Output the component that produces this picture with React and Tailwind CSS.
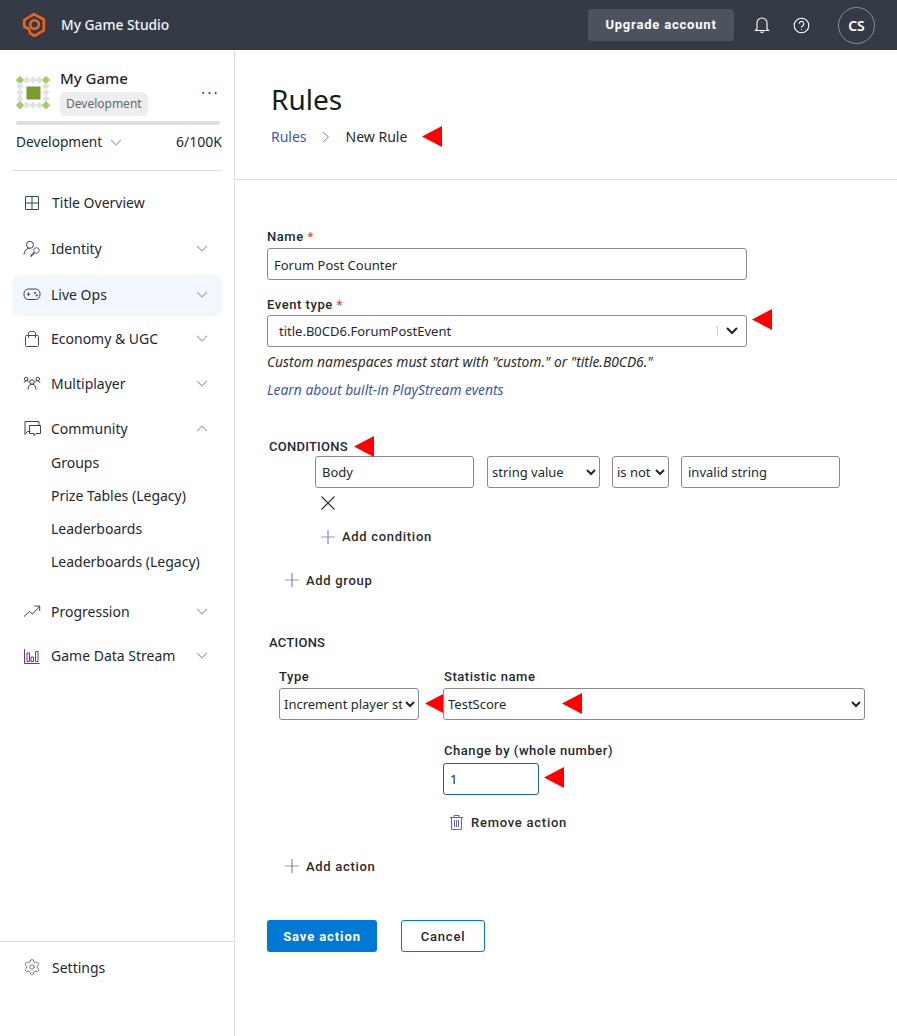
import React from "react";
import { Settings } from "lucide-react";

const body = "font-['Noto_Sans','Open_Sans',sans-serif]";
const din = "font-['Roboto',sans-serif]";

function Arrow({ className = "" }) {
  return (
    <svg width="20" height="21" viewBox="0 0 20 21" className={`absolute ${className}`}>
      <polygon points="0,10.5 20,0 20,21" fill="#ff0000" />
    </svg>
  );
}

function Ico({ children, color = "#3b4252" }) {
  return (
    <svg width="18" height="18" viewBox="0 0 18 18" fill="none" stroke={color} strokeWidth="1" className="shrink-0">
      {children}
    </svg>
  );
}

function Chevron({ up }) {
  return (
    <svg width="12" height="7" viewBox="0 0 12 7" fill="none" stroke="#a6a6a6" strokeWidth="1.1" className="shrink-0">
      <path d={up ? "M1 6.2 6 1l5 5.2" : "M1 .8 6 6l5-5.2"} />
    </svg>
  );
}

const icons = {
  grid: (
    <Ico color="#2f4f4f"><path d="M2.500 2.500h13v13h-13zM9 2.500v13M2.500 9h13" /></Ico>
  ),
  identity: (
    <Ico><circle cx="7" cy="4.800" r="3.500" /><path d="M1 14.500c.3-3.600 2.200-5.800 5.500-6.200" /><circle cx="13.500" cy="10.500" r="2.800" stroke="#6b5b95" /><path d="M11.500 12.500 7.500 16.500" stroke="#6b5b95" strokeWidth="1.800" /></Ico>
  ),
  game: (
    <Ico><rect x="1" y="4" width="16" height="10.500" rx="4.500" /><path d="M3.800 9.200h3.400M5.500 7.500v3.400" /><circle cx="12" cy="8" r=".7" /><circle cx="13.800" cy="10.400" r=".7" /></Ico>
  ),
  bag: (
    <Ico color="#5c3d6e"><rect x="2.500" y="5.500" width="13" height="11" rx="1" /><path d="M5.500 8V3.500a2 2 0 0 1 2-2h3a2 2 0 0 1 2 2V8" /></Ico>
  ),
  people: (
    <Ico color="#33384a"><circle cx="9" cy="7" r="2.300" /><circle cx="3.200" cy="4" r="1.700" /><circle cx="14.800" cy="4" r="1.700" /><path d="M5 14.500c.2-3.700 1.700-5.300 4-5.300s3.800 1.600 4 5.300M1 8c.4-1.300 1.200-2.300 2.500-2.300 1 0 1.900.6 2.300 1.500M12.200 7.200c.4-.9 1.300-1.500 2.300-1.500 1.300 0 2.100 1 2.500 2.300" /></Ico>
  ),
  chat: (
    <Ico><path d="M7.500 11.500H4.500L2 14.500V1.500h14V5.500" /><path d="M6.500 5.500h11v8h-4.500l-2 2.200v-2.200h-4.500z" /></Ico>
  ),
  trend: (
    <Ico><path d="M1 13.500 6.500 8.500 9.500 11 16.500 3.500M11.500 3H16.700V8" /></Ico>
  ),
  bars: (
    <Ico color="#7b2d8b"><path d="M1.500 2v14.500h15" /><path d="M4 6h2.500v8.500H4zM8 10h2.500v4.500H8zM12.500 4.500H15v10h-2.500z" /></Ico>
  ),
};

function NavItem({ icon, label, chevron, up, active, className = "" }) {
  return (
    <div className={`flex h-[41px] items-center rounded-lg pl-[11px] pr-[14px] text-[14px] text-[#1f2733] ${active ? "bg-[#f2f6fd] pb-[3px]" : ""} ${className}`}>
      {icon}
      <span className="ml-[10px] flex-1">{label}</span>
      {chevron && <Chevron up={up} />}
    </div>
  );
}

function Plus() {
  return (
    <svg width="14" height="14" viewBox="0 0 14 14" className="shrink-0">
      <path d="M0 7h14" stroke="#9a9ab5" />
      <path d="M7 0v14" stroke="#7a62c4" />
    </svg>
  );
}

function LinkRow({ label, className = "" }) {
  return (
    <div className={`flex items-center gap-[7px] text-[13px] font-medium tracking-[0.7px] text-[#2b2b2b] ${din} ${className}`}>
      <Plus />
      <span>{label}</span>
    </div>
  );
}

const field = "h-[32px] rounded-[3px] border border-[#8a8a8a] bg-white text-[13px] text-[#1f2733] outline-none";
const label = `text-[13px] leading-[18px] font-medium tracking-[0.55px] text-[#1f2733] ${din}`;

function Diamonds() {
  const cells = [];
  for (let r = 0; r < 5; r++) {
    for (let c = 0; c < 5; c++) {
      if (r > 0 && r < 4 && c > 0 && c < 4) continue;
      const corner = (r === 0 || r === 4) && (c === 0 || c === 4);
      const x = 4 + c * 6.500;
      const y = 4 + r * 6.300;
      const s = corner ? 4.200 : 3.700;
      cells.push(
        <polygon key={`${r}-${c}`} points={`${x},${y - s} ${x + s},${y} ${x},${y + s} ${x - s},${y}`} fill={corner ? "#a9cc62" : "#e2e2e2"} />
      );
    }
  }
  return (
    <svg width="35" height="35" viewBox="0 0 35 35" className="shrink-0">
      {cells}
      <rect x="10.500" y="10.500" width="14" height="13" fill="#7a9c33" />
    </svg>
  );
}

export default function App() {
  return (
    <div className={`flex min-h-screen flex-col bg-white ${body}`}>
      <header className="flex h-[50px] shrink-0 items-center bg-[#343b46] text-white">
        <svg width="24" height="26" viewBox="0 0 24 26" fill="none" stroke="#f0631d" strokeWidth="2.600" strokeLinejoin="round" className="ml-[22px]">
          <path d="M8 4.500 12 2.200 21.800 7.500v10.800L12.500 23.800 8 21.200 7 16.500" />
          <path d="M8 4.500 2.200 8v6.500L7 17" />
          <circle cx="12.500" cy="12.500" r="4.300" />
        </svg>
        <span className="ml-[15px] flex-1 text-[13.800px] font-medium text-[#f2f4f6]">My Game Studio</span>
        <div className={`flex h-[32px] w-[146px] items-center justify-center rounded-[3px] bg-[#4c535f] text-[13px] font-bold tracking-[0.8px] ${din}`}>Upgrade account</div>
        <svg width="16" height="18" viewBox="0 0 16 18" fill="none" stroke="white" strokeWidth="1.100" className="ml-[20px]">
          <path d="M3 13V7a5 5 0 0 1 10 0v6l1.500 1.500h-13z" />
          <path d="M6.500 15.500a1.600 1.600 0 0 0 3 0" />
        </svg>
        <svg width="17" height="17" viewBox="0 0 17 17" fill="none" stroke="white" strokeWidth="1.100" className="ml-[23px]">
          <circle cx="8.500" cy="8.500" r="7.300" />
          <path d="M6.200 6.700a2.300 2.300 0 1 1 3.500 2c-.8.5-1.200.9-1.200 1.800" />
          <path d="M8.500 12v1" />
        </svg>
        <div className="ml-[28px] mr-[22px] flex h-[37px] w-[37px] items-center justify-center rounded-full border border-[#8a8f97] text-[14px] font-semibold">CS</div>
      </header>

      <div className="flex flex-1">
        <aside className="flex w-[235px] shrink-0 flex-col border-r border-[#dedede]">
          <div className="mx-[12px] border-b border-[#dedede] pb-[18px] pt-[18px]">
            <div className="flex pl-[4px]">
              <div className="pt-[8px]"><Diamonds /></div>
              <div className="ml-[9px] flex-1">
                <div className="text-[15px] font-medium leading-[20px] text-[#1f2733]">My Game</div>
                <div className="mt-[4px] inline-block rounded-[6px] bg-[#eeeeee] px-[6px] text-[12px] leading-[24px] text-[#5f6670]">Development</div>
              </div>
              <div className="mr-[2px] mt-[15px] text-[14px] leading-[20px] tracking-[2.500px] text-[#333]">···</div>
            </div>
            <div className="mx-[4px] mt-[5px] h-[4px] w-[204px] rounded bg-[#dedede]" />
            <div className="mt-[7px] flex items-center pl-[4px] text-[14px] leading-[20px] text-[#1f2733]">
              <span className="text-[13.700px]">Development</span>
              <span className="ml-[8px] mr-auto"><Chevron /></span>
              <span>6/100K</span>
            </div>
          </div>

          <nav className="px-[12px] pt-[11px]">
            <NavItem icon={icons.grid} label={<span className="ml-[1px]">Title Overview</span>} />
            <NavItem icon={icons.identity} label="Identity" chevron className="mt-[5px]" />
            <NavItem icon={icons.game} label="Live Ops" chevron active className="mt-[6px]" />
            <NavItem icon={icons.bag} label="Economy & UGC" chevron className="mt-[2px]" />
            <NavItem icon={icons.people} label="Multiplayer" chevron className="mt-[4px]" />
            <NavItem icon={icons.chat} label="Community" chevron up className="mt-[4px]" />
            <div className="-mt-[3px] flex flex-col pl-[39px] text-[14px] text-[#1f2733]">
              <div className="flex h-[33px] items-center">Groups</div>
              <div className="flex h-[33px] items-center">Prize Tables (Legacy)</div>
              <div className="flex h-[33px] items-center">Leaderboards</div>
              <div className="flex h-[33px] items-center">Leaderboards (Legacy)</div>
            </div>
            <NavItem icon={icons.trend} label="Progression" chevron className="mt-[13px]" />
            <NavItem icon={icons.bars} label="Game Data Stream" chevron className="mt-[3px]" />
          </nav>

          <div className="mt-auto flex h-[95px] items-start border-t border-[#dedede] pl-[23px] pt-[15px] text-[14px] text-[#1f2733]">
            <Settings size={18} strokeWidth={1} color="#4a4f57" className="mt-[1px] shrink-0" />
            <span className="ml-[11px]">Settings</span>
          </div>
        </aside>

        <main className="flex-1">
          <div className="h-[130px] border-b border-[#dedede] pl-[36px] pt-[27px]">
            <h1 className="text-[28px] leading-[44px] text-[#1a1a1a]">Rules</h1>
            <div className="relative mt-[6px] flex items-center text-[14px] leading-[20px]">
              <span className="text-[#3d5a9e]">Rules</span>
              <svg width="8" height="12" viewBox="0 0 8 12" fill="none" stroke="#8a8a8a" className="ml-[15px] mr-[16px]"><path d="m1 1 5.500 5L1 11" /></svg>
              <span className="text-[#1f2733]">New Rule</span>
              <Arrow className="left-[151px] top-[-1px]" />
            </div>
          </div>

          <form className="flex flex-col pl-[32px] pt-[48px]">
            <label className={label}>Name <span className="text-[#c9504c]">*</span></label>
            <input readOnly value="Forum Post Counter" className={`${field} mt-[2px] w-[480px] px-[6px] pt-[1px]`} />

            <label className={`${label} mt-[16px]`}>Event type <span className="text-[#c9504c]">*</span></label>
            <div className={`${field} relative mt-[1px] flex w-[480px] items-center pl-[11px]`}>
              <span className="flex-1 pt-[1px]">title.B0CD6.ForumPostEvent</span>
              <span className="h-[10px] w-px bg-[#cfcfcf]" />
              <svg width="12" height="8" viewBox="0 0 12 8" fill="none" stroke="#222" strokeWidth="2" className="mx-[8px]"><path d="m1 1 5 5 5-5" /></svg>
              <Arrow className="left-[484px] top-[-7px]" />
            </div>
            <p className="mt-[5px] text-[13.800px] italic leading-[20px] text-[#2b2b2b]">Custom namespaces must start with "custom." or "title.B0CD6."</p>
            <p className="mt-[8px] text-[13.800px] italic leading-[20px] text-[#3d5a9e]">Learn about built-in PlayStream events</p>

            <div className={`relative ml-[2px] mt-[38px] text-[13px] font-medium leading-[18px] tracking-[0.25px] text-[#1f2733] ${din}`}>
              CONDITIONS
              <Arrow className="left-[85px] top-[-2px]" />
            </div>
            <div className="ml-[48px] flex items-center">
              <input readOnly value="Body" className={`${field} w-[159px] px-[6px]`} />
              <select defaultValue="s" className={`${field} ml-[13px] w-[113px]`}><option value="s">string value</option></select>
              <select defaultValue="n" className={`${field} ml-[12px] w-[57px]`}><option value="n">is not</option></select>
              <input readOnly value="invalid string" className={`${field} ml-[12px] w-[159px] px-[6px]`} />
            </div>
            <svg width="14" height="14" viewBox="0 0 14 14" fill="none" stroke="#2b3038" strokeWidth="1.100" className="ml-[54px] mt-[8px]"><path d="m.5.5 13 13M13.500.5l-13 13" /></svg>
            <LinkRow label="Add condition" className="ml-[54px] mt-[17px]" />
            <LinkRow label="Add group" className="ml-[18px] mt-[24px]" />

            <div className={`ml-[2px] mt-[44px] text-[13px] font-medium leading-[18px] tracking-[0.25px] text-[#1f2733] ${din}`}>ACTIONS</div>
            <div className="ml-[12px] mt-[16px] flex">
              <div className="flex flex-col">
                <label className={label}>Type</label>
                <div className="relative mt-[2px]">
                  <select defaultValue="i" className={`${field} w-[140px]`}><option value="i">Increment player statistic</option></select>
                  <Arrow className="left-[146px] top-[5px]" />
                </div>
              </div>
              <div className="ml-[24px] flex flex-col">
                <label className={`${label} pl-[1px]`}>Statistic name</label>
                <div className="relative mt-[2px]">
                  <select defaultValue="t" className={`${field} w-[422px]`}><option value="t">TestScore</option></select>
                  <Arrow className="left-[119px] top-[5px]" />
                </div>
                <label className={`${label} mt-[22px] pl-[1px]`}>Change by (whole number)</label>
                <div className="relative mt-[3px]">
                  <input readOnly value="1" className="h-[32px] w-[96px] rounded-[3px] border border-[#1f5fae] bg-white px-[6px] text-[13px] text-[#1f2733] outline-none" />
                  <Arrow className="left-[101px] top-[4px]" />
                </div>
                <div className={`ml-[7px] mt-[18px] flex items-center gap-[8px] text-[13px] font-medium tracking-[0.75px] text-[#2b2b2b] ${din}`}>
                  <svg width="13" height="15" viewBox="0 0 13 15" fill="none" stroke="#6a5fb0"><path d="M0 2.500h13M4 2.500V.5h5v2M1.500 2.500v12h10v-12M4.500 5v7M6.500 5v7M8.500 5v7" /></svg>
                  <span>Remove action</span>
                </div>
              </div>
            </div>
            <LinkRow label="Add action" className="ml-[18px] mt-[24px]" />

            <div className="mt-[44px] flex pb-[40px]">
              <div className={`flex h-[32px] w-[110px] items-center justify-center rounded-[3px] bg-[#0078d4] pt-[1px] text-[13px] font-bold tracking-[0.9px] text-white ${din}`}>Save action</div>
              <div className={`ml-[24px] flex h-[32px] w-[84px] items-center justify-center rounded-[3px] border border-[#0078d4] bg-white pt-[1px] text-[13px] font-medium tracking-[0.8px] text-[#1f2733] ${din}`}>Cancel</div>
            </div>
          </form>
        </main>
      </div>
    </div>
  );
}
